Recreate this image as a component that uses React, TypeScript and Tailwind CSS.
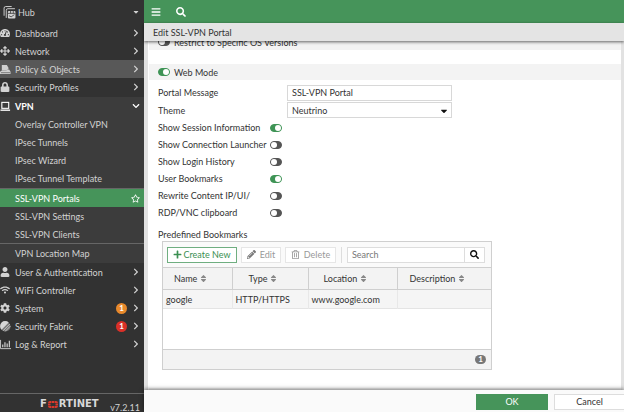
import clsx from "clsx"
import { ReactNode } from "react"
import {
  FaArrowsAlt,
  FaBars,
  FaCaretDown,
  FaChevronDown,
  FaChevronRight,
  FaCog,
  FaLock,
  FaPencilAlt,
  FaPlus,
  FaRegStar,
  FaRegTrashAlt,
  FaSearch,
  FaSort,
  FaTachometerAlt,
  FaUser,
  FaWifi,
} from "react-icons/fa"

const HubIcon = () => (
  <svg viewBox="0 0 12 12" className="size-[13px]" fill="none" stroke="#d0d0d0">
    <path d="M1 9V2q0-1.500 1.500-1.500H8M3 11V4q0-1.500 1.500-1.500H11" strokeWidth=".9" />
    <rect x="4.5" y="4.5" width="7" height="7" rx="1" fill="#d0d0d0" stroke="none" />
    <path d="M4.5 6.8h7M7 4.5v2.3M9.5 4.5v2.3M5.5 9l2 1 3-2" stroke="#333" strokeWidth=".7" />
  </svg>
)

const PolicyIcon = () => (
  <svg viewBox="0 0 12 12" className="size-[11px]" fill="#d0d0d0">
    <path d="M2 1h5.5l2 3.5-2 2.5H2z" />
    <path d="M0 8.5 2 7h5l1-1h2l1.5 2.5V11H0z" />
    <path d="M1 9.5h10" stroke="#585858" strokeWidth=".8" />
  </svg>
)

const LaptopIcon = () => (
  <svg viewBox="0 0 12 12" className="size-[11px]" fill="none" stroke="#fff">
    <rect x="2" y="1.5" width="7.5" height="6.5" strokeWidth="1.2" />
    <path d="M.5 10h10.5" strokeWidth="1.5" />
  </svg>
)

const FabricIcon = () => (
  <svg viewBox="0 0 12 12" className="size-[11px]">
    <circle cx="6" cy="6" r="5.5" fill="#777" />
    <path d="M9.5 1.7A5.5 5.5 0 0 0 1.7 9.5z" fill="#d6d6d6" />
    <path d="m3.3 10.7 7.4-7.4M5.6 11.3l5.7-5.7" stroke="#d6d6d6" strokeWidth=".9" />
  </svg>
)

const ReportIcon = () => (
  <svg viewBox="0 0 12 12" className="size-[11px]" stroke="#d0d0d0" fill="none">
    <path d="M.6 1v9.5H12" strokeWidth="1" />
    <path d="M3 9V6M5.4 9V3.5M7.8 9V5M10.2 9V2" strokeWidth="1.3" />
  </svg>
)

type NavItemProps = {
  icon: ReactNode
  label: string
  badge?: string
  hover?: boolean
  open?: boolean
}

const NavItem = ({ icon, label, badge, hover, open }: NavItemProps) => (
  <a
    href="#"
    className={clsx(
      "flex h-[18px] items-center pr-1",
      hover && "bg-[#585858]",
      open && "font-bold text-white"
    )}
  >
    <span className="flex w-[15px] shrink-0">{icon}</span>
    <span className="flex-1">{label}</span>
    {badge && (
      <span
        className={clsx(
          "mr-[5px] flex size-[11px] items-center justify-center rounded-full text-[8px] font-bold text-white",
          badge
        )}
      >
        1
      </span>
    )}
    {open ? <FaChevronDown className="size-2" /> : <FaChevronRight className="size-2" />}
  </a>
)

const SubItem = ({ label, active }: { label: string; active?: boolean }) => (
  <a
    href="#"
    className={clsx(
      "flex h-[18px] items-center justify-between pr-1 pl-[15px]",
      active && "bg-[#46945a] text-white"
    )}
  >
    {label}
    {active && <FaRegStar className="size-[9px]" />}
  </a>
)

const Sidebar = () => (
  <aside className="flex w-36 shrink-0 flex-col bg-[#323232] text-[#d2d2d2]">
    <button className="flex h-6 shrink-0 items-center pr-1 pl-[3px]">
      <HubIcon />
      <span className="flex-1 pl-0.5 text-left">Hub</span>
      <FaCaretDown className="size-2" />
    </button>
    <nav className="flex-1">
      <div className="pb-px">
        <NavItem icon={<FaTachometerAlt className="size-[10px]" />} label="Dashboard" />
        <NavItem icon={<FaArrowsAlt className="size-[10px]" />} label="Network" />
        <NavItem icon={<PolicyIcon />} label="Policy & Objects" hover />
        <NavItem icon={<FaLock className="size-[10px]" />} label="Security Profiles" />
      </div>
      <div className="bg-[#3c3c3c] pb-px">
        <NavItem icon={<LaptopIcon />} label="VPN" open />
        <SubItem label="Overlay Controller VPN" />
        <SubItem label="IPsec Tunnels" />
        <SubItem label="IPsec Wizard" />
        <SubItem label="IPsec Tunnel Template" />
        <div className="mt-px border-y border-[#666]">
          <SubItem label="SSL-VPN Portals" active />
          <SubItem label="SSL-VPN Settings" />
          <SubItem label="SSL-VPN Clients" />
        </div>
        <SubItem label="VPN Location Map" />
      </div>
      <NavItem icon={<FaUser className="size-[10px]" />} label="User & Authentication" />
      <NavItem icon={<FaWifi className="size-[10px]" />} label="WiFi Controller" />
      <NavItem icon={<FaCog className="size-[10px]" />} label="System" badge="bg-[#e8892b]" />
      <NavItem icon={<FabricIcon />} label="Security Fabric" badge="bg-[#da3028]" />
      <NavItem icon={<ReportIcon />} label="Log & Report" />
    </nav>
    <footer className="flex h-[19px] shrink-0 items-center justify-between border-t border-[#666] pr-1 pl-10">
      <span
        className="flex items-center pt-0.5 font-['DejaVu_Sans'] text-[10px] leading-none font-bold text-[#d8d8d8]"
        aria-label="Fortinet"
      >
        F
        <svg viewBox="0 0 10 7" className="mx-px h-[7px] w-[10px]" fill="#d8382c">
          <path d="M0 2Q0 0 2 0H3V2H0zM3.500 0h3v2h-3zM7 0h1Q10 0 10 2H7zM0 2.500h2.500v2H0zM7.500 2.500H10v2H7.500zM0 5h3v2H2Q0 7 0 5zM3.500 5h3v2h-3zM7 5h3Q10 7 8 7H7z" />
        </svg>
        RTINET
      </span>
      <span className="pt-2">v7.2.11</span>
    </footer>
  </aside>
)

const Toggle = ({ id, on }: { id: string; on?: boolean }) => (
  <input
    id={id}
    type="checkbox"
    defaultChecked={on}
    className="flex h-2 w-3 shrink-0 appearance-none items-center rounded-full border border-[#555] bg-[#555] before:size-1.5 before:rounded-full before:bg-white checked:justify-end checked:border-[#3f9456] checked:bg-[#3f9456]"
  />
)

const SectionHead = ({ id, label, on }: { id: string; label: string; on?: boolean }) => (
  <div className="flex h-4 items-center gap-1 bg-[#f3f3f3] pl-[9px]">
    <Toggle id={id} on={on} />
    <label htmlFor={id}>{label}</label>
  </div>
)

const OPTIONS = [
  { id: "session", label: "Show Session Information", on: true },
  { id: "launcher", label: "Show Connection Launcher" },
  { id: "history", label: "Show Login History" },
  { id: "bookmarks", label: "User Bookmarks", on: true },
  { id: "rewrite", label: "Rewrite Content IP/UI/" },
  { id: "clipboard", label: "RDP/VNC clipboard" },
]

const COLUMNS = [
  { label: "Name", width: "w-[69px]", pad: "pl-[11px]" },
  { label: "Type", width: "w-[76px]", pad: "pl-4" },
  { label: "Location", width: "w-[89px]", pad: "pl-[15px]" },
  { label: "Description", width: "", pad: "pl-3" },
]

const BookmarksTable = () => (
  <div className="ml-[13px] w-[330px] border border-[#cfcfcf]">
    <div className="flex h-[25px] items-center bg-[#fafafa] px-1">
      <button className="flex h-4 w-[70px] items-center justify-center gap-px border border-[#6fae80] bg-white text-[#3b8f52]">
        <FaPlus className="size-[9px]" />
        Create New
      </button>
      <button className="ml-1 flex h-4 w-10 items-center justify-center gap-1 border border-[#e6e6e6] bg-white text-[#999]">
        <FaPencilAlt className="size-[9px] text-[#777]" />
        Edit
      </button>
      <button className="ml-1 flex h-4 w-[51px] items-center justify-center gap-1 border border-[#e6e6e6] bg-white text-[#999]">
        <FaRegTrashAlt className="size-[9px]" />
        Delete
      </button>
      <span className="mx-[5px] h-4 w-px bg-[#ddd]" />
      <input
        type="search"
        aria-label="Search"
        placeholder="Search"
        className="h-4 w-[118px] border border-[#ddd] bg-white px-1 placeholder:text-[#777]"
      />
      <button
        aria-label="Run search"
        className="flex h-4 w-5 items-center justify-center border border-l-0 border-[#ddd] bg-white text-[#111]"
      >
        <FaSearch className="size-[9px]" />
      </button>
    </div>
    <table className="w-full table-fixed border-collapse text-left">
      <thead>
        <tr className="h-[22px] border-y border-[#cfcfcf] bg-[#f3f3f3]">
          {COLUMNS.map(({ label, width, pad }) => (
            <th
              key={label}
              className={clsx("border-r border-[#cfcfcf] p-0 font-normal last:border-r-0", width)}
            >
              <span className={clsx("flex items-center gap-0.5", pad)}>
                {label}
                <FaSort className="size-[9px] text-[#888]" />
              </span>
            </th>
          ))}
        </tr>
      </thead>
      <tbody>
        <tr className="h-[19px] border-b border-[#e4e4e4] bg-[#f5f5f5]">
          {["google", "HTTP/HTTPS", "www.google.com", ""].map((cell, i) => (
            <td key={i} className="border-r border-[#e8e8e8] p-0 pl-[3px] last:border-r-0">
              {cell}
            </td>
          ))}
        </tr>
      </tbody>
    </table>
    <div className="mt-10 flex h-5 items-center justify-end border-t border-[#cfcfcf] bg-[#f3f3f3] pr-[5px]">
      <span className="flex h-[9px] w-[11px] items-center justify-center rounded-full bg-[#777] text-[8px] font-bold text-white">
        1
      </span>
    </div>
  </div>
)

const PortalForm = () => (
  <form className="-mt-[7px]">
    <SectionHead id="restrict" label="Restrict to Specific OS Versions" />
    <div className="h-3.5" />
    <SectionHead id="web-mode" label="Web Mode" on />
    <div className="pt-1 pl-[9px]">
      <div className="flex h-[17px] items-center">
        <label htmlFor="message" className="w-[129px]">
          Portal Message
        </label>
        <input
          id="message"
          defaultValue="SSL-VPN Portal"
          className="h-4 w-[165px] border border-[#d8d8d8] bg-white px-1"
        />
      </div>
      <div className="flex h-[18px] items-center">
        <label htmlFor="theme" className="w-[129px]">
          Theme
        </label>
        <span className="relative">
          <select
            id="theme"
            className="block h-4 w-[165px] appearance-none border border-[#d8d8d8] bg-white px-1"
          >
            <option>Neutrino</option>
          </select>
          <FaCaretDown className="pointer-events-none absolute top-1 right-[3px] size-[10px] text-[#111]" />
        </span>
      </div>
      {OPTIONS.map(({ id, label, on }) => (
        <div key={id} className="flex h-[17px] items-center">
          <label htmlFor={id} className="w-28 whitespace-nowrap">
            {label}
          </label>
          <Toggle id={id} on={on} />
        </div>
      ))}
    </div>
    <h2 className="flex h-5 items-end pl-[9px]">Predefined Bookmarks</h2>
    <BookmarksTable />
    <div className="mt-[18px]">
      <SectionHead id="tunnel" label="" on />
    </div>
  </form>
)

export default function App() {
  return (
    <div className="flex h-screen overflow-hidden bg-white font-[Lato,sans-serif] text-[9px] leading-[13px] text-[#333]">
      <Sidebar />
      <div className="flex min-w-0 flex-1 flex-col">
        <header className="flex h-[23px] shrink-0 items-center gap-[15px] bg-[#46945a] pl-[7px] text-white">
          <button aria-label="Menu">
            <FaBars className="size-[10px]" />
          </button>
          <button aria-label="Search">
            <FaSearch className="size-[10px]" />
          </button>
        </header>
        <h1 className="z-10 flex h-[18px] shrink-0 items-center bg-[#e4e4e4] pl-[9px] shadow-[0_1px_3px_rgba(0,0,0,0.6)]">
          Edit SSL-VPN Portal
        </h1>
        <main className="min-h-0 flex-1 overflow-hidden border-x-4 border-r-[3px] border-[#e2e2e2] pl-px">
          <PortalForm />
        </main>
        <footer className="z-10 flex h-[22px] shrink-0 items-center justify-end gap-1.5 bg-[#fafafa] pt-px shadow-[0_-1px_4px_rgba(0,0,0,0.5)]">
          <button className="h-4 w-[72px] bg-[#46945a] text-white">OK</button>
          <button className="h-4 w-[70px] border border-r-0 border-[#ddd] bg-white">
            Cancel
          </button>
        </footer>
      </div>
    </div>
  )
}
